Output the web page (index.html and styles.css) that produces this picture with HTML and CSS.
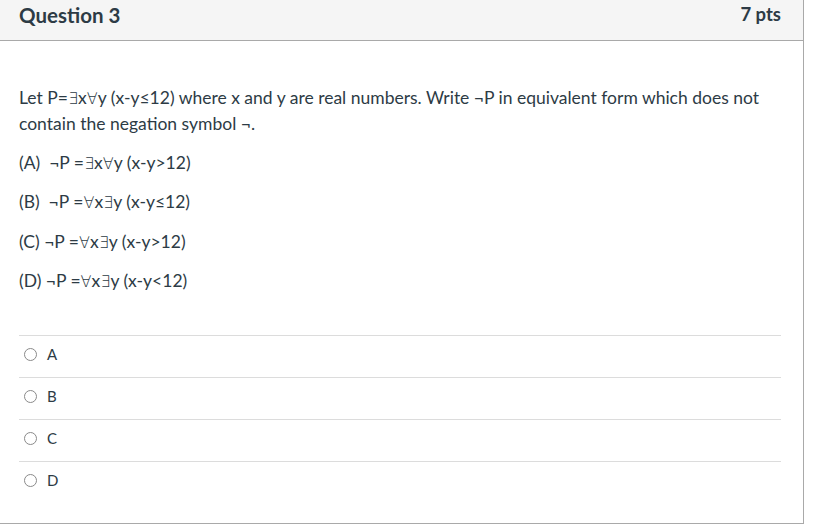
FILE: index.html
```html
<!DOCTYPE html>
<html>
<head>
<meta charset="utf-8">
<link rel="stylesheet" href="styles.css">
</head>
<body>
<div class="card">
  <div class="header">
    <span class="title">Question 3</span>
    <span class="pts">7 pts</span>
  </div>
  <div class="text">
    <p class="lead">Let P=<span class="q">∃</span>x<span class="q">∀</span>y (x-y≤12) where x and y are real numbers. Write ¬P in equivalent form which does not contain the negation symbol ¬.</p>
    <p class="opt">(A)&nbsp; ¬P =<span class="q">∃</span>x<span class="q">∀</span>y (x-y&gt;12)</p>
    <p class="opt">(B)&nbsp; ¬P =<span class="q">∀</span>x<span class="q">∃</span>y (x-y≤12)</p>
    <p class="opt">(C) ¬P =<span class="q">∀</span>x<span class="q">∃</span>y (x-y&gt;12)</p>
    <p class="opt">(D) ¬P =<span class="q">∀</span>x<span class="q">∃</span>y (x-y&lt;12)</p>
  </div>
  <div class="answers">
    <div class="answer"><span class="radio"></span><span class="label">A</span></div>
    <div class="answer"><span class="radio"></span><span class="label">B</span></div>
    <div class="answer"><span class="radio"></span><span class="label">C</span></div>
    <div class="answer"><span class="radio"></span><span class="label">D</span></div>
  </div>
</div>
</body>
</html>
```

FILE: styles.css
```css
html, body {
  margin: 0;
  padding: 0;
  background: #ffffff;
}
body {
  font-family: Lato, "Liberation Sans", sans-serif;
  color: #2d3b45;
}
.card {
  width: 803px;
  border-right: 1px solid #a9a9a9;
  border-bottom: 1px solid #a9a9a9;
  box-sizing: content-box;
}
.header {
  height: 40px;
  background: #f5f5f5;
  border-bottom: 1px solid #a9a9a9;
  display: flex;
  justify-content: space-between;
  align-items: flex-start;
  padding: 0 22px 0 19px;
}
.title {
  font-size: 20.5px;
  font-weight: 700;
  line-height: 24px;
  margin-top: 3px;
}
.pts {
  font-size: 18.5px;
  font-weight: 700;
  line-height: 22px;
  margin-top: 3px;
}
.text {
  padding: 44px 22px 0 19px;
  font-size: 17.5px;
  line-height: 25px;
}
.text p {
  margin: 0;
}
.q {
  font-family: "DejaVu Sans", sans-serif;
  font-weight: 200;
  font-size: 16px;
  line-height: 1;
}
.text .lead {
  line-height: 26px;
  margin-bottom: 12.5px;
}
.text .opt {
  margin-bottom: 14.5px;
}
.answers {
  margin: 42px 22px 0 19px;
  padding-bottom: 20px;
}
.answer {
  border-top: 1px solid #dcdcdc;
  display: flex;
  align-items: center;
  padding-bottom: 5px;
  box-sizing: border-box;
  height: 42px;
}
.radio {
  width: 11px;
  height: 11px;
  border: 1px solid #8a8a8a;
  border-radius: 50%;
  margin-left: 5px;
  margin-right: 10px;
  background: #fff;
}
.label {
  font-size: 15px;
  line-height: 20px;
}
```
